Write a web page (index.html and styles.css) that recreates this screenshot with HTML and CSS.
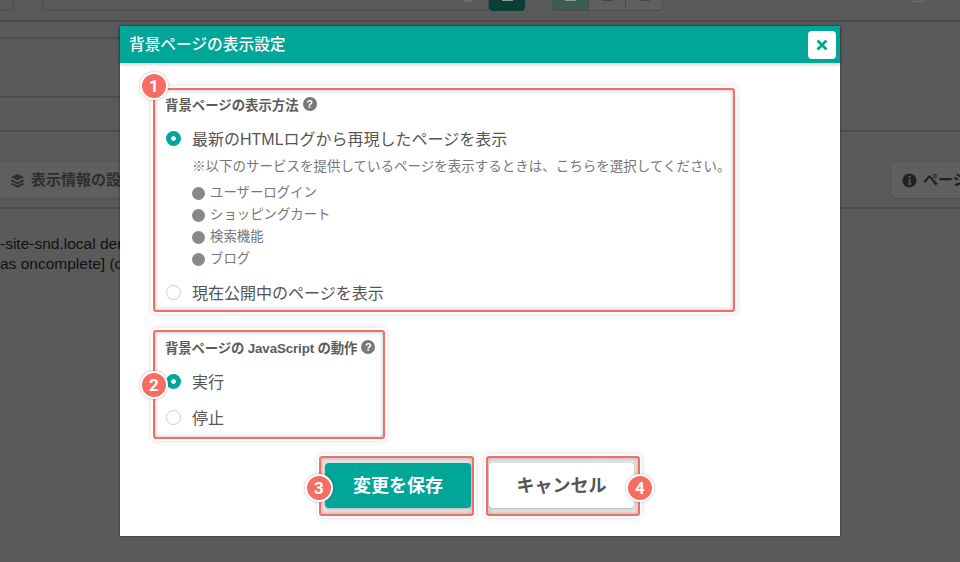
FILE: index.html
```html
<!DOCTYPE html>
<html lang="ja">
<head>
  <meta charset="utf-8">
  <title>背景ページの表示設定</title>
  <link rel="stylesheet" href="styles.css">
</head>
<body>
  <!-- dimmed editor behind the dialog -->
  <div class="backdrop">
    <div class="topbar">
      <div class="top-btn"></div>
      <div class="top-input">
        <svg class="star" viewBox="0 0 14 4"><path d="M7 -6l2 4.500 5 .5-3.700 3.300h-6.600L0 -1l5-.5z" fill="#6c6c6c"/></svg>
      </div>
      <div class="top-save"></div>
      <div class="top-group">
        <div class="top-seg top-seg-on"></div>
        <div class="top-seg"></div>
        <div class="top-seg"></div>
      </div>
      <div class="top-circle"></div>
    </div>
    <div class="band band-1"><div class="rule-left"></div></div>
    <div class="band band-2"><div class="rule-left"></div></div>
    <div class="band band-3"></div>
    <div class="tabs">
      <div class="tab tab-left">
        <svg class="tab-icon" viewBox="0 0 16 16">
          <path d="M8 1l7 3.400L8 7.800 1 4.400z" fill="#2e2e2e"/>
          <path d="M1.500 7.900L8 11l6.500-3.100M1.500 11.300L8 14.500l6.500-3.200" fill="none" stroke="#2e2e2e" stroke-width="2"/>
        </svg>
        <span>表示情報の設定</span>
      </div>
      <div class="tab tab-right">
        <svg class="tab-icon" viewBox="0 0 16 16">
          <circle cx="8" cy="8" r="7.500" fill="#222"/>
          <rect x="7" y="3.200" width="2" height="2" fill="#5b5b5b"/>
          <path d="M6.300 6.600H9v4.600h1v1.300H6.300v-1.300h1V7.900h-1z" fill="#5b5b5b"/>
        </svg>
        <span>ページ</span>
      </div>
    </div>
    <div class="log">
      <p>-site-snd.local demo</p>
      <p>as oncomplete] (cache)</p>
    </div>
  </div>

  <div class="modal">
    <div class="modal-head">
      <h1>背景ページの表示設定</h1>
      <button class="close-btn" type="button" aria-label="閉じる">
        <svg viewBox="0 0 12 12"><path d="M1.500 1.500l9 9m0-9l-9 9" stroke="#00a698" stroke-width="2.800" fill="none"/></svg>
      </button>
    </div>
    <form class="modal-body">
      <div class="note note-method">
        <span class="badge badge-1">1</span>
        <div class="field-title">背景ページの表示方法 <span class="help">?</span></div>
        <label class="radio-row first"><input type="radio" name="method" checked>最新のHTMLログから再現したページを表示</label>
        <p class="hint">※以下のサービスを提供しているページを表示するときは、こちらを選択してください。</p>
        <ul class="services">
          <li>ユーザーログイン</li>
          <li>ショッピングカート</li>
          <li>検索機能</li>
          <li>ブログ</li>
        </ul>
        <label class="radio-row last"><input type="radio" name="method">現在公開中のページを表示</label>
      </div>

      <div class="note note-js">
        <span class="badge badge-2">2</span>
        <div class="field-title">背景ページの JavaScript の動作 <span class="help">?</span></div>
        <label class="radio-row first"><input type="radio" name="js" checked>実行</label>
        <label class="radio-row second"><input type="radio" name="js">停止</label>
      </div>

      <div class="actions">
        <div class="note note-btn note-save">
          <span class="badge badge-3">3</span>
          <button class="btn btn-save" type="button">変更を保存</button>
        </div>
        <div class="note note-btn note-cancel">
          <span class="badge badge-4">4</span>
          <button class="btn btn-cancel" type="button">キャンセル</button>
        </div>
      </div>
    </form>
  </div>
</body>
</html>
```

FILE: styles.css
```css
* {
  box-sizing: border-box;
}

html, body {
  margin: 0;
  height: 562px;
  overflow: hidden;
}

body {
  position: relative;
  background-color: #5a5a5a;
  font-family: "Liberation Sans", "Noto Sans CJK JP", sans-serif;
  color: #555;
}

/* backdrop */
.topbar {
  display: flex;
  height: 22px;
  border-bottom: 2px solid #4a4a4a;
}

.top-btn {
  width: 14px;
  height: 11px;
  border: 1px solid #4c4c4c;
  border-top: 0;
  border-left: 0;
  border-radius: 0 0 4px 0;
}

.top-input {
  display: flex;
  justify-content: flex-end;
  align-items: flex-start;
  width: 447px;
  height: 11px;
  margin-left: 28px;
  padding-right: 13px;
  border: 1px solid #4c4c4c;
  border-top: 0;
  border-radius: 0 0 4px 4px;
}

.star {
  width: 14px;
  height: 4px;
}

.top-save {
  width: 36px;
  height: 11px;
  background-color: #0a3f38;
  border-radius: 0 0 4px 4px;
}

.top-save::before,
.top-seg::before {
  content: "";
  display: block;
  width: 11px;
  height: 1px;
  margin: 0 auto;
  background-color: #454545;
}

.top-save::before,
.top-seg-on::before {
  background-color: #8a9a97;
}

.top-group {
  display: flex;
  margin-left: 27px;
  height: 11px;
}

.top-seg {
  width: 37px;
  background-color: #5f5f5f;
  border-right: 1px solid #4c4c4c;
  border-bottom: 1px solid #4c4c4c;
}

.top-seg:last-child {
  border-radius: 0 0 4px 0;
}

.top-seg-on {
  background-color: #3e5a55;
  border-radius: 0 0 0 4px;
}

.top-circle {
  width: 12px;
  height: 2px;
  margin-left: 250px;
  border: 1px solid #707070;
  border-top: 0;
  border-radius: 0 0 6px 6px;
}

.band {
  display: flex;
  align-items: flex-end;
}

.band-1 {
  height: 17px;
}

.band-2 {
  height: 59px;
}

.band-3 {
  height: 34px;
  border-bottom: 2px solid #4d4d4d;
}

.rule-left {
  width: 130px;
  height: 2px;
  background-color: #4d4d4d;
}

.tabs {
  display: flex;
  justify-content: space-between;
  height: 77px;
  padding-top: 30px;
  border-bottom: 2px solid #4d4d4d;
}

.tab {
  display: flex;
  align-items: center;
  gap: 6px;
  height: 36px;
  padding-bottom: 3px;
  background-color: #5f5f5f;
  box-shadow: 0 1px 2px rgba(0, 0, 0, 0.2);
  font-size: 15px;
  font-weight: bold;
  white-space: nowrap;
}

.tab-left {
  width: 140px;
  padding-left: 10px;
  color: #2e2e2e;
}

.tab-right {
  width: 69px;
  padding-left: 11px;
  overflow: hidden;
  border-radius: 5px 0 0 5px;
  color: #1f1f1f;
}

.tab-icon {
  flex: none;
  width: 15px;
  height: 15px;
  margin-top: 3px;
}

.log {
  padding-top: 25px;
  font-size: 15.5px;
  line-height: 20px;
  color: #111;
  white-space: nowrap;
}

.log p {
  margin: 0;
}

/* dialog */
.modal {
  position: absolute;
  top: 26px;
  left: 120px;
  width: 720px;
  height: 510px;
  background-color: #fff;
  box-shadow: 0 0 2px rgba(0, 0, 0, 0.6);
}

.modal-head {
  display: flex;
  align-items: center;
  justify-content: space-between;
  height: 37px;
  padding: 0 4px 0 9px;
  background-color: #00a698;
  box-shadow: 0 1px 4px rgba(0, 0, 0, 0.25);
}

.modal-head h1 {
  margin: 0 0 3px;
  font-size: 15.7px;
  font-weight: 500;
  color: #fff;
}

.close-btn {
  display: flex;
  align-items: center;
  justify-content: center;
  width: 28px;
  height: 28px;
  padding: 0;
  background-color: #fff;
  border: 0;
  border-radius: 4px;
}

.close-btn svg {
  width: 12px;
  height: 12px;
}

.modal-body {
  padding: 25px 33px 0;
}

.note {
  position: relative;
  border: 2px solid #f56d63;
  border-radius: 3px;
  box-shadow: 0 0 0 2px #fff, 0 0 5px 2px rgba(0, 0, 0, 0.15), inset 0 0 4px rgba(0, 0, 0, 0.25);
}

.note-method {
  width: 582px;
  height: 224px;
  padding: 4px 0 0 11px;
}

.note-js {
  width: 232px;
  height: 109px;
  margin-top: 18px;
  padding: 5px 0 0 11px;
}

.field-title {
  display: flex;
  align-items: center;
  gap: 4px;
  height: 20px;
  margin-left: -1px;
  font-size: 13.4px;
  font-weight: bold;
  color: #5c5c5c;
  white-space: nowrap;
}

.note-js .field-title {
  letter-spacing: -0.15px;
}

.help {
  display: flex;
  align-items: center;
  justify-content: center;
  width: 14px;
  height: 14px;
  border-radius: 50%;
  background-color: #777;
  font-size: 11px;
  color: #fff;
}

.radio-row {
  display: flex;
  align-items: center;
  gap: 11px;
  height: 24px;
  font-size: 16px;
  color: #555;
  white-space: nowrap;
}

.radio-row.first {
  margin-top: 12px;
}

.radio-row.second {
  margin-top: 12px;
}

.radio-row.last {
  margin-top: 10px;
}

.radio-row input {
  appearance: none;
  flex: none;
  width: 15px;
  height: 15px;
  margin: 0;
  background-color: #fff;
  border: 1px solid #ccc;
  border-radius: 50%;
}

.radio-row input:checked {
  background-color: #00a698;
  border: 5px solid #00a698;
  box-shadow: inset 0 0 0 3px #fff;
}

.hint {
  margin: 7px 0 0 26px;
  font-size: 13.5px;
  line-height: 20px;
  color: #777;
  white-space: nowrap;
}

.services {
  margin: 5px 0 0 26px;
  padding: 0;
  list-style: none;
  font-size: 13.4px;
  line-height: 22px;
  color: #777;
}

.services li {
  display: flex;
  align-items: center;
  gap: 5px;
  height: 22px;
}

.services li::before {
  content: "";
  width: 13px;
  height: 13px;
  border-radius: 50%;
  background-color: #888;
}

.actions {
  display: flex;
  justify-content: center;
  gap: 12px;
  margin-top: 17px;
  padding-right: 1px;
}

.note-btn {
  height: 60px;
  background-color: #e4e4e4;
}

.note-save {
  width: 155px;
  padding: 5px 1px 6px 4px;
}

.note-cancel {
  width: 154px;
  padding: 5px 4px 6px 1px;
}

.btn {
  display: block;
  width: 100%;
  height: 45px;
  padding: 0 0 4px;
  border: 0;
  border-radius: 4px;
  font-family: inherit;
  font-size: 18px;
  font-weight: bold;
  box-shadow: 0 1px 2px rgba(0, 0, 0, 0.2);
}

.btn-save {
  background-color: #00a698;
  color: #fff;
}

.btn-cancel {
  background-color: #fff;
  color: #555;
}

/* numbered markers */
.badge {
  position: absolute;
  z-index: 2;
  display: flex;
  align-items: center;
  justify-content: center;
  width: 28px;
  height: 28px;
  background-color: #f56d63;
  border: 2px solid #fff;
  border-radius: 50%;
  box-shadow: 0 0 3px rgba(0, 0, 0, 0.3);
  font-family: "Roboto", sans-serif;
  font-size: 17px;
  font-weight: bold;
  color: #fff;
}

.badge-1 {
  top: -18px;
  left: -15px;
}

.badge-2 {
  top: 39px;
  left: -15px;
}

.badge-3 {
  top: 16px;
  left: -16px;
}

.badge-4 {
  top: 16px;
  right: -16px;
}
```
